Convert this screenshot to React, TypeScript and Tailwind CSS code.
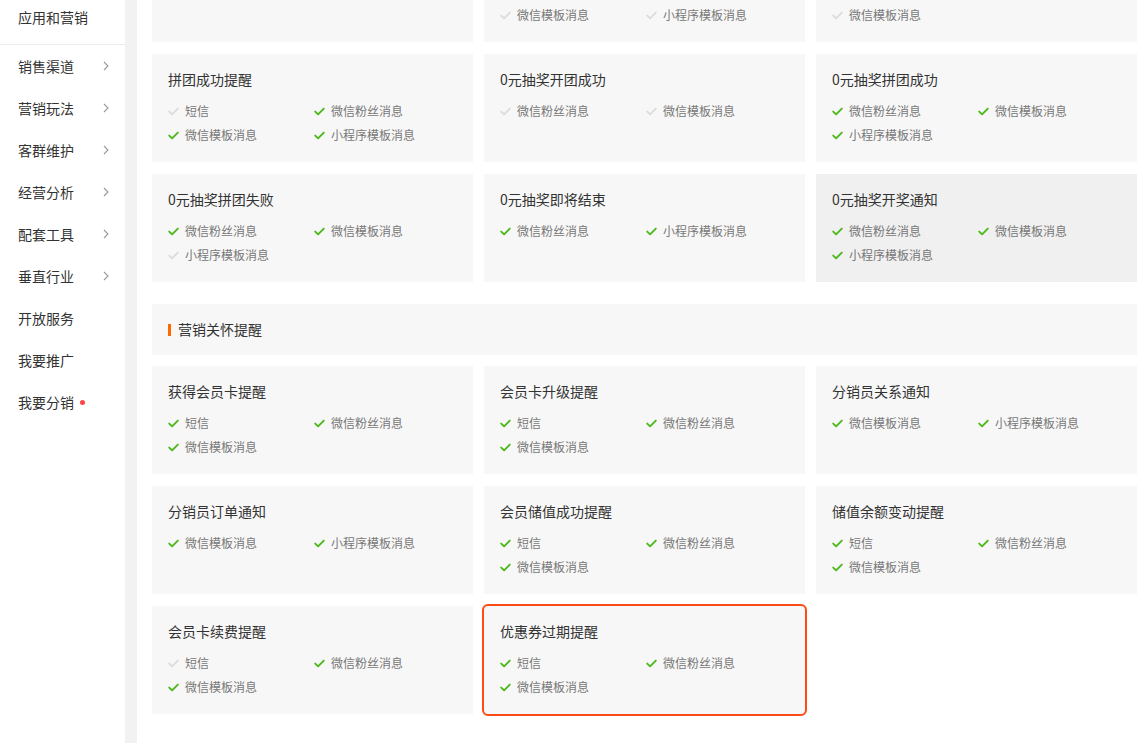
import { Fragment } from "react";

type Item = [string, boolean];
type Card = { title: string; items: Item[]; hover?: boolean; active?: boolean };

const menu = [
  { label: "销售渠道", arrow: true },
  { label: "营销玩法", arrow: true },
  { label: "客群维护", arrow: true },
  { label: "经营分析", arrow: true },
  { label: "配套工具", arrow: true },
  { label: "垂直行业", arrow: true },
  { label: "开放服务" },
  { label: "我要推广" },
  { label: "我要分销", dot: true },
];

// tail of the row scrolled above the viewport: only its last line of items shows
const scrolledRow: Item[][] = [
  [],
  [["微信模板消息", false], ["小程序模板消息", false]],
  [["微信模板消息", false]],
];

const groupA: Card[] = [
  { title: "拼团成功提醒", items: [["短信", false], ["微信粉丝消息", true], ["微信模板消息", true], ["小程序模板消息", true]] },
  { title: "0元抽奖开团成功", items: [["微信粉丝消息", false], ["微信模板消息", false]] },
  { title: "0元抽奖拼团成功", items: [["微信粉丝消息", true], ["微信模板消息", true], ["小程序模板消息", true]] },
  { title: "0元抽奖拼团失败", items: [["微信粉丝消息", true], ["微信模板消息", true], ["小程序模板消息", false]] },
  { title: "0元抽奖即将结束", items: [["微信粉丝消息", true], ["小程序模板消息", true]] },
  { title: "0元抽奖开奖通知", items: [["微信粉丝消息", true], ["微信模板消息", true], ["小程序模板消息", true]], hover: true },
];

const groupB: Card[] = [
  { title: "获得会员卡提醒", items: [["短信", true], ["微信粉丝消息", true], ["微信模板消息", true]] },
  { title: "会员卡升级提醒", items: [["短信", true], ["微信粉丝消息", true], ["微信模板消息", true]] },
  { title: "分销员关系通知", items: [["微信模板消息", true], ["小程序模板消息", true]] },
  { title: "分销员订单通知", items: [["微信模板消息", true], ["小程序模板消息", true]] },
  { title: "会员储值成功提醒", items: [["短信", true], ["微信粉丝消息", true], ["微信模板消息", true]] },
  { title: "储值余额变动提醒", items: [["短信", true], ["微信粉丝消息", true], ["微信模板消息", true]] },
  { title: "会员卡续费提醒", items: [["短信", false], ["微信粉丝消息", true], ["微信模板消息", true]] },
  { title: "优惠券过期提醒", items: [["短信", true], ["微信粉丝消息", true], ["微信模板消息", true]], active: true },
];

function Tick({ on }: { on: boolean }) {
  return (
    <svg width="11" height="9" viewBox="0 0 11 9" className="shrink-0">
      <path
        d="M1.2 4.6 L4.1 7.3 L9.8 1.6"
        fill="none"
        stroke={on ? "#4fb81d" : "#dcdcdc"}
        strokeWidth="1.9"
        strokeLinecap="round"
        strokeLinejoin="round"
      />
    </svg>
  );
}

function Items({ items }: { items: Item[] }) {
  return (
    <div className="grid grid-cols-[146px_146px]">
      {items.map(([label, on], i) => (
        <div key={i} className="flex h-6 items-center gap-[6px] text-[12px] text-[#777]">
          <Tick on={on} />
          <span>{label}</span>
        </div>
      ))}
    </div>
  );
}

function NoticeCard({ card }: { card: Card }) {
  return (
    <div
      className={`h-[108px] px-4 pt-[16px] ${card.hover ? "bg-[#f0f0f0]" : "bg-[#f7f7f7]"} ${
        card.active ? "rounded-[4px] outline-2 outline-[#ff4a17]" : ""
      }`}
    >
      <div className="text-[14px] leading-[18px] text-[#333]">{card.title}</div>
      <div className="mt-[11px]">
        <Items items={card.items} />
      </div>
    </div>
  );
}

export default function App() {
  return (
    <div
      className="flex h-[743px] w-[1147px] overflow-hidden bg-white"
      style={{ fontFamily: '"PingFang SC", "Noto Sans CJK SC", "Noto Sans", sans-serif' }}
    >
      {/* Sidebar */}
      <aside className="w-[125px] shrink-0 bg-white">
        <div className="flex h-[45px] items-center border-b border-[#ececec] pl-[18px] pb-[10px] text-[14px] text-[#333]">
          应用和营销
        </div>
        <ul>
          {menu.map((m) => (
            <li key={m.label} className="flex h-[42px] items-center pl-[18px] pr-[16px] text-[14px] text-[#333]">
              <span>{m.label}</span>
              {m.dot && <span className="ml-[6px] h-[5px] w-[5px] rounded-full bg-[#f44]" />}
              {m.arrow && (
                <svg width="6" height="10" viewBox="0 0 6 10" className="ml-auto">
                  <path d="M1 1 L5 5 L1 9" fill="none" stroke="#999" strokeWidth="1.1" />
                </svg>
              )}
            </li>
          ))}
        </ul>
      </aside>
      <div className="w-[12px] shrink-0 bg-[#f2f2f2]" />

      {/* Content */}
      <main className="flex-1 pl-[15px] pr-[10px]">
        <div className="grid grid-cols-3 gap-x-[11px]">
          {scrolledRow.map((items, i) => (
            <div key={i} className="h-[42px] bg-[#f7f7f7] px-4 pt-[3px]">
              <Items items={items} />
            </div>
          ))}
        </div>

        <div className="mt-[12px] grid grid-cols-3 gap-x-[11px] gap-y-[12px]">
          {groupA.map((c) => (
            <NoticeCard key={c.title} card={c} />
          ))}
        </div>

        <div className="mt-[22px] flex h-[51px] items-center bg-[#f7f7f7] pl-4 text-[14px] text-[#333]">
          <span className="mr-[7px] h-[12px] w-[3px] bg-[#ff6a00]" />
          营销关怀提醒
        </div>

        <div className="mt-[11px] grid grid-cols-3 gap-x-[11px] gap-y-[12px]">
          {groupB.map((c) => (
            <Fragment key={c.title}>
              <NoticeCard card={c} />
            </Fragment>
          ))}
        </div>
      </main>
    </div>
  );
}
